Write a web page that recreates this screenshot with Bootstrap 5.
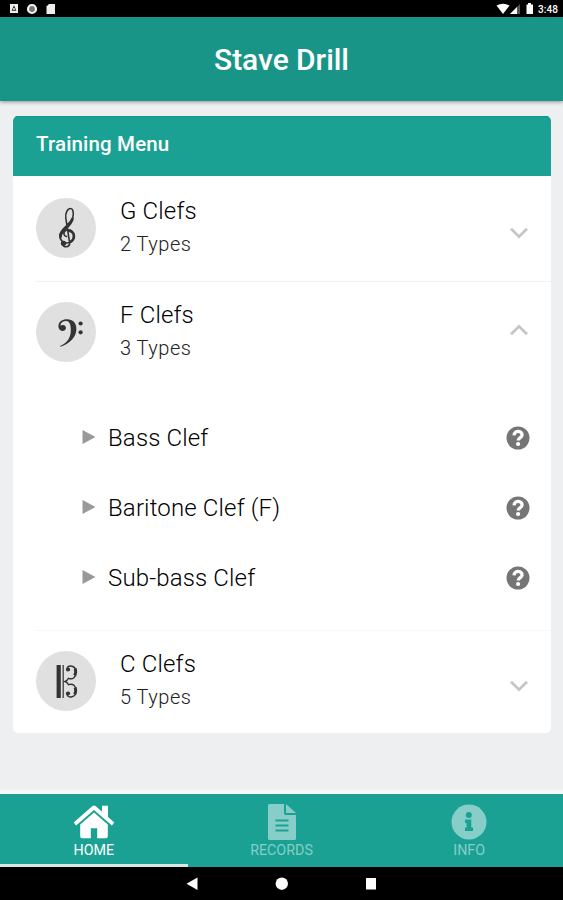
<!DOCTYPE html>
<html lang="en">
<head>
<meta charset="utf-8">
<meta name="viewport" content="width=device-width, initial-scale=1">
<title>Stave Drill</title>
<link href="https://cdn.jsdelivr.net/npm/bootstrap@5.3.0/dist/css/bootstrap.min.css" rel="stylesheet">
<style>
body{font-family:Roboto,"Liberation Sans",sans-serif;background:#edeff0;height:900px;overflow:hidden}
svg{display:block;flex:none}
.status{height:17px;background:#000;color:#fff;padding:0 5px 0 9px}
.clock{font-size:10px;line-height:17px;padding-top:1px;font-weight:500;letter-spacing:.1px}
.appbar{height:84px;background:#199587;color:#fff;padding-top:1px;box-shadow:0 1px 4px rgba(0,0,0,.4)}
.appbar h1{font-size:30px;font-weight:500;line-height:36px;letter-spacing:-.05px}
.menu-card{margin:15px 12px 0 13px;height:617px;border-radius:5px}
.menu-head{height:60px;background:#1aa194;color:#fff;border-top:1px solid #159487;padding:0 23px 4px;font-size:20.5px;font-weight:500;letter-spacing:.15px}
.clef-row{margin-left:23px;padding-right:23px;padding-bottom:1px}
.row-g{height:105px}
.row-f{height:101px;border-top:1px solid #f3f3f3}
.row-c{height:102px;border-top:1px solid #f7f7f7}
.avatar{width:60px;height:60px;background:#e0e0e0;margin-right:24px}
.name,.types{line-height:33px}
.name{font-size:24px;font-weight:300;color:#000;letter-spacing:.15px}
.types{font-size:20px;font-weight:300;color:#222;letter-spacing:.5px}
.subs{height:248px;padding:21px 21px 0 69px}
.sub-item{height:70.2px}
.sub-item .name{margin-left:12px;padding-top:1px}
.drop{margin-top:9px}
.lift{margin-top:-4px}
.tabs{height:77px;background:#1aa194;border-top:4px solid #f6f8f8}
.tab-link{color:#86cec7;font-size:14.3px;line-height:18px;padding-top:9px;border-bottom:3px solid transparent}
.tab-link.current{color:#fff;border-color:#d8e9e4}
.tab-text{padding-top:1px}
.sysbar{height:33px;background:#000;padding-right:2px}
</style>
<script src="https://cdn.jsdelivr.net/npm/bootstrap@5.3.0/dist/js/bootstrap.bundle.min.js"></script>
</head>
<body class="d-flex flex-column">
<div class="status d-flex align-items-center justify-content-between flex-shrink-0">
  <svg width="50" height="17" viewBox="0 0 50 17"><path d="M1 4h8v9H1z" fill="#eee"/><path d="M2.6 10.7 5 5.3l2.4 5.4z" fill="#222"/><circle cx="5" cy="9" r="1" fill="#eee"/><circle cx="23" cy="9" r="4" fill="#777" stroke="#f4f4f4" stroke-width="2.2"/><path d="M40 4h6v10h-8.500V6.500z" fill="#eee"/></svg>
  <div class="d-flex align-items-center">
    <svg width="42" height="17" viewBox="496 0 42 17"><path d="M496.500 5.500q6.500-3.500 13 0l-6.500 8.500z" fill="#fff"/><path d="M520 4v10h-10z" fill="#555"/><path d="M517 7v7h-7z" fill="#fff"/><path d="M526.500 4.500h1.500V3h3v1.500h2V14h-6.500z" fill="#fff"/></svg>
    <span class="clock">3:48</span>
  </div>
</div>
<header class="appbar d-flex align-items-center justify-content-center flex-shrink-0"><h1 class="m-0">Stave Drill</h1></header>
<main class="flex-grow-1">
  <section class="menu-card bg-white overflow-hidden">
    <div class="menu-head d-flex align-items-center">Training Menu</div>
    <div class="clef-row row-g d-flex align-items-center">
      <div class="avatar rounded-circle d-flex align-items-center justify-content-center">
        <svg width="60" height="60" viewBox="36 198 60 60" fill="none" stroke="#333" stroke-linecap="round"><path d="M66.500 236.500c-3-.5-3.800-4.800-.3-6.200 4.300-1.500 8.300 1.500 8.300 5.900 0 3.900-3.200 6.800-7.300 6.800-4.500 0-7.400-3.300-7.400-7.300 0-8 13.800-11.500 13.500-21.700-.1-3.600-1-5.500-2.700-5.500-2.900 0-5.600 4.500-4.800 9.700l3.800 24.300c.8 5.500-7 5.500-7.300 1" stroke-width="1.600"/><path d="M60.500 237c-.3-6.500 10.200-10 12-18" stroke-width="2.600"/><path d="M69 231c6 .8 5.800 8.200 1.500 10.800" stroke-width="2.200"/><circle cx="63.500" cy="243.300" r="2.600" fill="#333" stroke="none"/></svg>
      </div>
      <div class="flex-grow-1"><div class="name">G Clefs</div><div class="types">2 Types</div></div>
      <svg class="drop" width="18" height="12" viewBox="0 0 18 12"><path d="m1 1.700 8 8 8-8" fill="none" stroke="#c5c5c5" stroke-width="2.700"/></svg>
    </div>
    <div class="clef-row row-f d-flex align-items-center">
      <div class="avatar rounded-circle d-flex align-items-center justify-content-center">
        <svg width="60" height="60" viewBox="36 301 60 60" fill="#333"><path d="M60 345c7.500-3.600 10.800-8 10.800-16.300 0-5.500-1.500-8.700-4.700-8.700-3.200 0-5.500 2-5.800 4.600 3.300-1.700 6.200.2 5.600 3-.8 3.700-7.500 3.200-7.500-2.300 0-4.500 3.800-7.100 8.700-7.100 5.700 0 9.300 3.800 9.300 9.500 0 9-7.200 15-15.900 18z"/><circle cx="80.600" cy="322.500" r="2.100"/><circle cx="80.600" cy="331.300" r="2.100"/></svg>
      </div>
      <div class="flex-grow-1"><div class="name">F Clefs</div><div class="types">3 Types</div></div>
      <svg class="lift" width="18" height="12" viewBox="0 0 18 12"><path d="m1 10.300 8-8 8 8" fill="none" stroke="#c5c5c5" stroke-width="2.700"/></svg>
    </div>
    <div class="subs">
      <div class="sub-item d-flex align-items-center"><svg width="14" height="18"><path d="m.5 1 13 7-13 7z" fill="#999"/></svg><span class="name flex-grow-1">Bass Clef</span><svg width="24" height="24" viewBox="0 0 24 24"><circle cx="12" cy="12" r="11.500" fill="#757575"/><path d="M8 9.300c.5-5.500 8.500-4.800 8 0-.3 2.500-3.700 2.300-3.700 5.200" fill="none" stroke="#fff" stroke-width="3.300"/><circle cx="12.100" cy="18" r="2.100" fill="#fff"/></svg></div>
      <div class="sub-item d-flex align-items-center"><svg width="14" height="18"><path d="m.5 1 13 7-13 7z" fill="#999"/></svg><span class="name flex-grow-1">Baritone Clef (F)</span><svg width="24" height="24" viewBox="0 0 24 24"><circle cx="12" cy="12" r="11.500" fill="#757575"/><path d="M8 9.300c.5-5.500 8.500-4.800 8 0-.3 2.500-3.700 2.300-3.700 5.200" fill="none" stroke="#fff" stroke-width="3.300"/><circle cx="12.100" cy="18" r="2.100" fill="#fff"/></svg></div>
      <div class="sub-item d-flex align-items-center"><svg width="14" height="18"><path d="m.5 1 13 7-13 7z" fill="#999"/></svg><span class="name flex-grow-1">Sub-bass Clef</span><svg width="24" height="24" viewBox="0 0 24 24"><circle cx="12" cy="12" r="11.500" fill="#757575"/><path d="M8 9.300c.5-5.500 8.500-4.800 8 0-.3 2.500-3.700 2.300-3.700 5.200" fill="none" stroke="#fff" stroke-width="3.300"/><circle cx="12.100" cy="18" r="2.100" fill="#fff"/></svg></div>
    </div>
    <div class="clef-row row-c d-flex align-items-center">
      <div class="avatar rounded-circle d-flex align-items-center justify-content-center">
        <svg width="60" height="60" viewBox="36 651 60 60" fill="none" stroke="#333"><path d="M58.700 665v33" stroke-width="4.200"/><path d="M63.200 665v33" stroke-width="1.200"/><path d="M67 668c1.500-3 9-3 9 4 0 5-3 8-7.500 6.300-.8 1.700-1.800 2.700-3.500 3.200 1.700.5 2.700 1.500 3.500 3.200 4.500-1.700 7.500 1.300 7.500 6.300 0 7-7.500 7-9 4" stroke-width="1.400"/><path d="M75.200 668.500q1.300 3.500-.5 7M75.200 687.500q1.300 3.500-.5 7" stroke-width="3"/><circle cx="68" cy="669.500" r="2.100" fill="#333" stroke="none"/><circle cx="68" cy="693.500" r="2.100" fill="#333" stroke="none"/></svg>
      </div>
      <div class="flex-grow-1"><div class="name">C Clefs</div><div class="types">5 Types</div></div>
      <svg class="drop" width="18" height="12" viewBox="0 0 18 12"><path d="m1 1.700 8 8 8-8" fill="none" stroke="#c5c5c5" stroke-width="2.700"/></svg>
    </div>
  </section>
</main>
<nav class="tabs d-flex flex-shrink-0">
  <a href="#" class="tab-link current text-decoration-none d-flex flex-column align-items-center flex-fill w-100"><svg width="42" height="37" viewBox="0 0 42 37" fill="#fff"><path d="M21 2.400q.8 0 1.500.6l6.500 5.700V2.700h6v11.300l6.300 5.600-2.400 3L21 6.900 3.100 22.600.7 19.600 19.500 3q.7-.6 1.500-.6z"/><path d="m21 9.400 13.800 12v12q0 1.800-1.800 1.800h-8.800V25.200h-6.400v10H9q-1.800 0-1.800-1.800v-12z"/></svg><span class="tab-text">HOME</span></a>
  <a href="#" class="tab-link text-decoration-none d-flex flex-column align-items-center flex-fill w-100"><svg width="28" height="37" viewBox="0 0 28 37"><path d="M1.500 1H16v9q0 2 2 2h10v23.500q0 1.500-1.500 1.500h-25Q0 37 0 35.500v-33Q0 1 1.500 1zM18 1l10 9H18z" fill="#86cec7"/><path d="M7.500 17.500h13M7.500 22.500h13M7.500 27.500h13" stroke="#1aa194" stroke-width="2.200"/></svg><span class="tab-text">RECORDS</span></a>
  <a href="#" class="tab-link text-decoration-none d-flex flex-column align-items-center flex-fill w-100"><svg width="36" height="37" viewBox="0 0 36 37"><circle cx="18" cy="19" r="17.500" fill="#86cec7"/><circle cx="17.800" cy="12" r="3" fill="#1aa194"/><path d="M14 16.500h6.300v8H22V28h-8v-3.500h1.600V20H14z" fill="#1aa194"/></svg><span class="tab-text">INFO</span></a>
</nav>
<div class="sysbar flex-shrink-0 d-flex justify-content-center"><svg width="190" height="33" viewBox="186 867 190 33" fill="#fff"><path d="M197.500 877.500v12.500l-11-6.200z"/><circle cx="281.800" cy="883.700" r="6.200"/><path d="M366 878h11.500v11.500H366z"/></svg></div>
</body>
</html>
